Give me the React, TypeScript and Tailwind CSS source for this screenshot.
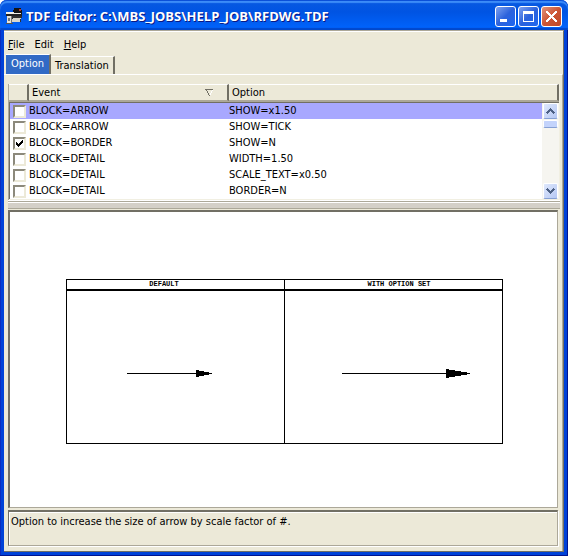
import React, { useState } from "react";

type Row = { id: number; event: string; option: string; checked: boolean };

const initialRows: Row[] = [
  { id: 1, event: "BLOCK=ARROW", option: "SHOW=x1.50", checked: false },
  { id: 2, event: "BLOCK=ARROW", option: "SHOW=TICK", checked: false },
  { id: 3, event: "BLOCK=BORDER", option: "SHOW=N", checked: true },
  { id: 4, event: "BLOCK=DETAIL", option: "WIDTH=1.50", checked: false },
  { id: 5, event: "BLOCK=DETAIL", option: "SCALE_TEXT=x0.50", checked: false },
  { id: 6, event: "BLOCK=DETAIL", option: "BORDER=N", checked: false },
];

function AppIcon() {
  return (
    <svg width="16" height="16" viewBox="0 0 16 16" shapeRendering="crispEdges" aria-hidden="true">
      <path d="M8 0h7v2h1v4H8V5H7V2h1z" fill="#141414" />
      <path d="M13 1h2v2h-2z" fill="#b03a30" />
      <path d="M0 4h8v1h7v2H0z" fill="#f1efe8" />
      <path d="M0 6h16v2H0z" fill="#222" />
      <path d="M1 8h4v7H1z" fill="#e6e3da" />
      <path d="M2 10h2v3H2zM5 8h1v7H5z" fill="#777" />
      <path d="M6 9h9v5H6z" fill="#d9d6cc" />
      <path d="M6 8h10v2H7v1H6zM14 11h1v3h-1z" fill="#303030" />
      <path d="M0 15h7v1H0z" fill="#555" />
    </svg>
  );
}

function TitleButton({ label, close, children }: { label: string; close?: boolean; children: React.ReactNode }) {
  return (
    <button
      type="button"
      aria-label={label}
      className={
        "flex size-[21px] items-center justify-center rounded-[3px] border border-white bg-linear-to-br " +
        (close ? "from-[#e0927c] via-[#cc5534] to-[#c04a28]" : "from-[#7ea0ee] via-[#2c62dc] to-[#1c66f0]")
      }
    >
      <svg width="19" height="19" viewBox="0 0 19 19" shapeRendering="crispEdges" aria-hidden="true">
        {children}
      </svg>
    </button>
  );
}

function TitleBar() {
  return (
    <header className="flex h-[30px] shrink-0 items-center justify-between rounded-t-[7px] bg-linear-to-b from-[#0a5ae0] from-0% via-[#0054e3] via-40% to-[#0062fa] to-90% pt-[2px] pr-[6px] pl-[6px] shadow-[inset_0_1px_0_#0b50d8,inset_0_3px_1px_#3c8cf8,inset_0_-2px_1px_#0048cc]">
      <div className="flex items-center gap-1">
        <AppIcon />
        <h1 className="font-['Open_Sans',sans-serif] text-[13px] leading-[18px] font-bold whitespace-nowrap text-white [text-shadow:1px_1px_0_#0a1883]">
          TDF Editor: C:\MBS_JOBS\HELP_JOB\RFDWG.TDF
        </h1>
      </div>
      <div className="flex gap-[2px]">
        <TitleButton label="Minimize">
          <path d="M4 12h7v3H4z" fill="#fff" />
        </TitleButton>
        <TitleButton label="Maximize">
          <path d="M4 4h11v11H4zM5 7v7h9V7z" fill="#fff" fillRule="evenodd" />
        </TitleButton>
        <TitleButton label="Close" close>
          <path d="M4 4h2v1h1v1h1v1h1v1h1V7h1V6h1V5h1V4h2v2h-1v1h-1v1h-1v1h-1v1h1v1h1v1h1v1h1v2h-2v-1h-1v-1h-1v-1h-1v-1H9v1H8v1H7v1H6v1H4v-2h1v-1h1v-1h1v-1h1V9H7V8H6V7H5V6H4z" fill="#fff" />
        </TitleButton>
      </div>
    </header>
  );
}

function ScrollArrow({ up }: { up?: boolean }) {
  return (
    <button
      type="button"
      aria-label={up ? "Scroll up" : "Scroll down"}
      className="flex h-4 w-[15px] items-center justify-center rounded-[2px] border border-b-[#86a0d4] border-white bg-linear-to-br from-[#dfe8fc] to-[#b5c7f3]"
    >
      <svg width="9" height="6" viewBox="0 0 9 6" shapeRendering="crispEdges" aria-hidden="true">
        <path
          d={
            up
              ? "M4 0h1v1h1v1h1v1h1v1h1v1H8v1H7V5H6V4H5V3H4v1H3v1H2v1H1V5H0V4h1V3h1V2h1V1h1z"
              : "M4 6h1V5h1V4h1V3h1V2h1V1H8V0H7v1H6v1H5v1H4V2H3V1H2V0H1v1H0v1h1v1h1v1h1v1h1z"
          }
          fill="#4d6185"
        />
      </svg>
    </button>
  );
}

const headCell =
  "h-[17px] border-t border-r-2 border-b border-t-white border-r-[#716f64] border-b-[#aca899] bg-[#ece9d8] py-0 pr-1 pl-[3px] text-left font-normal";

function OptionTable() {
  const [rows, setRows] = useState(initialRows);
  const toggle = (id: number) => setRows(rows.map((r) => (r.id === id ? { ...r, checked: !r.checked } : r)));

  return (
    <div className="border-r border-b border-[#f1efe2]">
      <table className="w-full table-fixed border-separate border-spacing-0">
        <colgroup>
          <col className="w-[20px]" />
          <col className="w-[200px]" />
          <col />
          <col className="w-[17px]" />
        </colgroup>
        <thead>
          <tr>
            <th className={headCell} aria-label="Enabled" />
            <th className={headCell}>
              <div className="flex items-center justify-between pr-[9px]">
                Event
                <svg width="9" height="7" viewBox="0 0 9 7" shapeRendering="crispEdges" aria-hidden="true">
                  <path d="M0 0h8v1H2v1h1v2h1v2h1v1H4V6H3V4H2V2H1V1H0z" fill="#716f64" />
                  <path d="M5 6V4h1V2h1V1h1v1H7v2H6v2z" fill="#fff" />
                </svg>
              </div>
            </th>
            <th className={headCell} colSpan={2}>
              Option
            </th>
          </tr>
        </thead>
        <tbody className="bg-white">
          <tr aria-hidden="true">
            <td colSpan={4} className="h-[2px] border-t border-b border-t-[#aca899] border-b-[#716f64] p-0" />
          </tr>
          {rows.map((r, i) => (
            <tr key={r.id} className={i === 0 ? "bg-[#a8a8ff]" : "bg-white"}>
              <td className="h-4 border-l border-l-[#716f64] p-0 pl-[3px]">
                <label className="grid size-[13px] place-items-center">
                  <input
                    type="checkbox"
                    aria-label={r.event + " " + r.option}
                    checked={r.checked}
                    onChange={() => toggle(r.id)}
                    className="col-start-1 row-start-1 size-[13px] appearance-none border-2 border-t-[#8c897b] border-r-[#ece9d8] border-b-[#ece9d8] border-l-[#8c897b] bg-white"
                  />
                  {r.checked && (
                    <svg className="pointer-events-none col-start-1 row-start-1" width="7" height="7" viewBox="0 0 7 7" shapeRendering="crispEdges" aria-hidden="true">
                      <path d="M6 0h1v3H6v1H5v1H4v1H3v1H2V6H1V5H0V2h1v1h1v1h1V3h1V2h1V1h1z" />
                    </svg>
                  )}
                </label>
              </td>
              <td className="h-4 p-0">{r.event}</td>
              <td className="h-4 p-0">{r.option}</td>
              {i === 0 && (
                <td rowSpan={6} className="bg-[#f6f5f0] p-0 align-top">
                  <div className="flex h-24 flex-col items-center">
                    <ScrollArrow up />
                    <div className="mt-px h-2 w-[15px] rounded-[2px] border border-b-[#86a0d4] border-white bg-[#c3d3fb]" />
                    <div className="flex-1" />
                    <ScrollArrow />
                  </div>
                </td>
              )}
            </tr>
          ))}
        </tbody>
      </table>
    </div>
  );
}

function Drawing() {
  return (
    <svg
      className="size-full"
      viewBox="0 0 547 290"
      preserveAspectRatio="xMidYMid meet"
      shapeRendering="crispEdges"
      role="img"
      aria-label="Arrow size with default and with option set"
    >
      <path d="M56 64h437v1H56zM56 74h437v2H56zM56 228h437v1H56zM56 64h1v165h-1zM274 64h1v165h-1zM492 64h1v165h-1z" />
      <g className="font-['Liberation_Mono',monospace] text-[7px] font-bold" textAnchor="middle">
        <text x="154" y="71">DEFAULT</text>
        <text x="389" y="71">WITH OPTION SET</text>
      </g>
      <path d="M117 158h85v1h-85zM186 155h3v1h5v1h5v3h-5v1h-5v1h-3z" />
      <path d="M332 158h128v1H332zM436 154h3v1h6v1h6v1h6v3h-6v1h-6v1h-6v1h-3z" />
    </svg>
  );
}

export default function App() {
  return (
    <div className="h-screen bg-white font-['DejaVu_Sans_Condensed','DejaVu_Sans',sans-serif] text-[11px] leading-[14px] text-black">
      <div className="flex h-full flex-col rounded-t-[7px] bg-[#0042d8] shadow-[inset_-1px_-1px_0_#001590,inset_1px_0_0_#0a2cc0]">
        <TitleBar />
        <main className="mx-1 mb-1 flex min-h-0 flex-1 flex-col border-t border-r border-b border-t-[#aca899] border-r-[#716f64] border-b-[#716f64] bg-[#ece9d8]">
          <nav className="flex h-[23px] shrink-0 items-center gap-[10px] border-t border-white px-1 pt-[3px]">
            <button type="button"><span className="underline">F</span>ile</button>
            <button type="button">Edit</button>
            <button type="button"><span className="underline">H</span>elp</button>
          </nav>
          <div role="tablist" className="flex h-5 shrink-0 items-end px-[2px]">
            <button role="tab" aria-selected="true" type="button" className="h-5 border-t border-r-2 border-t-white border-r-[#716f64] bg-[#316ac5] px-[5px] pb-[2px] text-white">
              Option
            </button>
            <button role="tab" aria-selected="false" type="button" className="h-[18px] border-t border-r-2 border-t-white border-r-[#716f64] px-1">
              Translation
            </button>
          </div>
          <section className="flex min-h-0 flex-1 flex-col border-t border-r border-t-white border-r-[#aca899] pt-[9px] pr-[2px] pb-[5px] pl-1">
            <div className="border-l border-l-[#aca899]">
              <OptionTable />
            </div>
            <div role="separator" className="flex h-[9px] shrink-0 flex-col">
              <div className="h-px bg-white" />
              <div className="h-px bg-[#aca899]" />
              <div className="h-[6px] border-t border-white bg-[#d4d0c8]" />
              <div className="h-px bg-[#aca899]" />
            </div>
            <div className="mt-px mr-[2px] min-h-0 flex-1 border border-t-2 border-l-2 border-[#aca899] border-t-[#716f64] border-l-[#716f64] bg-white">
              <Drawing />
            </div>
            <div role="status" className="mt-[2px] mr-[2px] h-9 shrink-0 border border-t-2 border-[#aca899] border-t-[#716f64] border-l-[#716f64] pt-[3px] pl-[2px] shadow-[inset_1px_1px_0_#fff,1px_1px_0_#fff]">
              Option to increase the size of arrow by scale factor of #.
            </div>
          </section>
        </main>
      </div>
    </div>
  );
}
